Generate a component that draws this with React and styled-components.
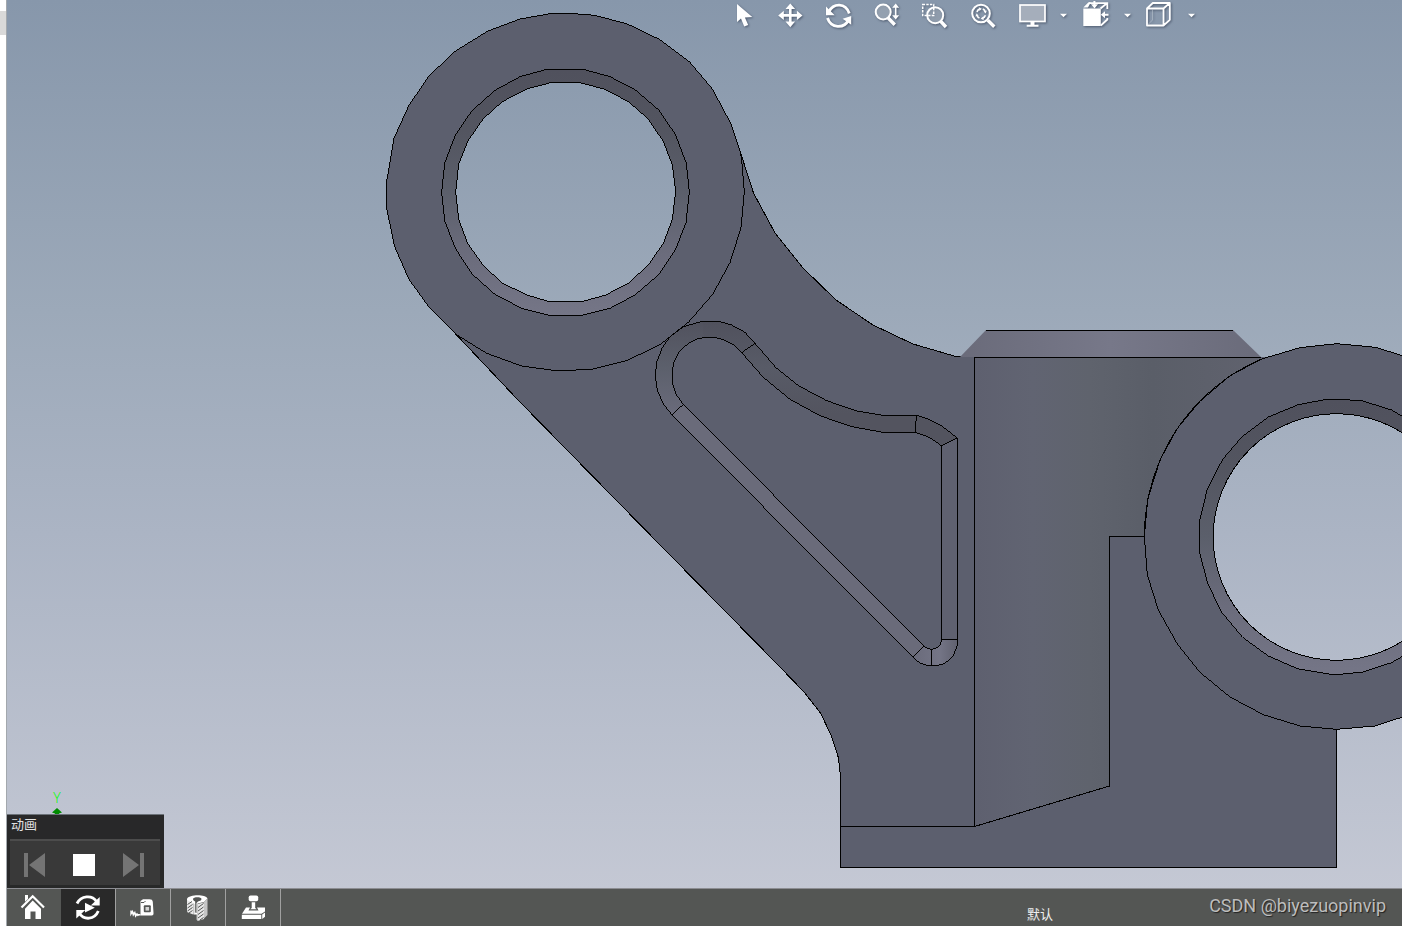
import styled, { createGlobalStyle, css } from 'styled-components';

const GlobalStyle = createGlobalStyle`
  * {
    box-sizing: border-box;
  }
  body {
    margin: 0;
    font-family: 'Liberation Sans', 'Noto Sans CJK SC', sans-serif;
    background-color: #ffffff;
  }
`;

const Page = styled.div`
  display: flex;
  height: 100vh;
  overflow: hidden;
`;
const Gutter = styled.div`
  flex: none;
  width: 7px;
  padding-top: 11px;
  border-right: 1px solid #a3a8ad;
`;
const GutterTab = styled.div`
  height: 24px;
  background-color: #d9d9d9;
`;
const Main = styled.main`
  flex: 1;
  min-width: 0;
  display: flex;
  flex-direction: column;
`;
const Viewport = styled.section`
  position: relative;
  flex: 1;
  min-height: 0;
  background-color: #c4c8d4;
`;
const Drawing = styled.svg`
  display: block;
  width: 100%;
  height: 100%;
`;
const ViewToolbar = styled.div`
  position: absolute;
  top: 0;
  right: 202px;
  display: flex;
`;
const plainButton = css`
  display: flex;
  align-items: center;
  justify-content: center;
  padding: 0;
  border: none;
  background: none;
  color: #ffffff;
`;
const ToolButton = styled.button`
  ${plainButton}
  width: ${(props) => (props.$caret ? '16px' : '48px')};
  height: 30px;
`;
const Icon = styled.svg`
  flex: none;
  width: ${(props) => props.$width || 30}px;
  height: 30px;
  fill: none;
  stroke: none;
  filter: ${(props) => (props.$shadow ? 'drop-shadow(1px 1px 1px rgba(40, 50, 70, 0.6))' : 'none')};
`;
const AnimationPanel = styled.div`
  position: absolute;
  left: 0;
  bottom: 0;
  width: 157px;
  padding: 0 4px 3px 3px;
  border-top: 1px solid #6b7178;
  background-color: rgba(35, 35, 35, 0.97);
`;
const PanelTitle = styled.h2`
  margin: 0;
  padding: 0 1px;
  height: 24px;
  font-size: 13px;
  line-height: 20px;
  font-weight: 400;
  color: #e2e2e2;
`;
const Controls = styled.div`
  display: grid;
  grid-template-columns: repeat(3, 1fr);
  height: 46px;
  padding: 4px 2px 0 0;
  border-top: 2px solid #4c4c4c;
  background-color: #393939;
`;
const ControlButton = styled.button`
  ${plainButton}
  color: ${(props) => (props.$active ? '#ffffff' : '#747474')};
`;
const BottomBar = styled.footer`
  flex: none;
  display: flex;
  height: 38px;
  border-top: 1px solid #8c8d92;
  background-color: #545654;
`;
const TabButton = styled.button`
  ${plainButton}
  box-sizing: content-box;
  width: 54px;
  padding-bottom: 1px;
  border-right: ${(props) => (props.$first ? 'none' : '1px solid #a0a0a0')};
  background-color: ${(props) => (props.$active ? '#292929' : 'transparent')};
`;
const ConfigName = styled.span`
  align-self: flex-end;
  margin-left: auto;
  padding-bottom: 2px;
  font-size: 13px;
  line-height: 18px;
  color: #f0f0f0;
`;
const Watermark = styled.span`
  margin-left: 156px;
  padding: 6px 16px 0 0;
  font-family: Roboto, sans-serif;
  font-size: 18px;
  line-height: 22px;
  color: #bdbdbd;
  text-shadow: 1px 1px 1px #222222;
`;

const CursorIcon = () => (
  <Icon $shadow viewBox='0 0 30 30'>
    <path fill='#fff' d='M8 4v18l4-3.4 3.2 8 4-1.7-3.3-7.4 7.4-.4z' />
  </Icon>
);
const PanIcon = () => (
  <Icon $shadow viewBox='0 0 30 30'>
    <path stroke='#fff' strokeWidth='2.6' d='M13.3 6v19M4 15.4h19' />
    <path
      fill='#fff'
      d='M13.3 3.5l4.8 5.6H8.5zM13.3 27.2l4.8-5.6H8.5zM1.2 15.4l5.6-4.7v9.4zM25.5 15.4l-5.6-4.7v9.4z'
    />
  </Icon>
);
const RotateIcon = () => (
  <Icon $shadow viewBox='0 0 30 30'>
    <path stroke='#fff' strokeWidth='2.8' d='M4 11.5C8.5 3 20.5 2.500 24.3 13.500M2.500 18C6 28.500 19 29 23.5 20' />
    <path fill='#fff' d='M1 6.500v8.700h8.700zM26.200 16v8.700l-8.600-6z' />
  </Icon>
);
const ZoomIcon = () => (
  <Icon $shadow viewBox='0 0 30 30'>
    <circle cx='10.2' cy='12' r='7.5' fill='#b4bfcc' fillOpacity='.6' stroke='#fff' strokeWidth='2' />
    <path stroke='#fff' strokeWidth='3.4' d='M15.2 18l6.600 6.800' />
    <path stroke='#fff' strokeWidth='1.5' d='M22.7 5v13' />
    <path fill='#fff' d='M22.7 3.5l3.500 4.300h-7zM22.7 19.5l3.500-4.300h-7z' />
  </Icon>
);
const ZoomAreaIcon = () => (
  <Icon $shadow viewBox='0 0 30 30'>
    <circle cx='14.2' cy='15.2' r='8' fill='#b4bfcc' fillOpacity='.5' stroke='#fff' strokeWidth='2' />
    <path stroke='#fff' strokeWidth='3.4' d='M19.400 21l5.600 6' />
    <rect x='1.7' y='4.5' width='11' height='11' stroke='#fff' strokeWidth='1.5' strokeDasharray='2.4 1.2' />
  </Icon>
);
const ZoomFitIcon = () => (
  <Icon $shadow viewBox='0 0 30 30'>
    <circle cx='12' cy='13.5' r='8.8' stroke='#fff' strokeWidth='2' />
    <path stroke='#fff' strokeWidth='3.4' d='M18.8 20.2l6.500 6.500' />
    <path stroke='#fff' strokeWidth='1.6' d='M8 12c.4-1.500 1.200-2.500 2.500-3M13.800 9c1.400.5 2.200 1.500 2.600 3M16.400 15.300c-.4 1.400-1.200 2.300-2.600 2.800M10.500 18.100c-1.300-.5-2.100-1.400-2.500-2.800' />
    <path fill='#fff' d='M9.800 7.300l3 1.500-2.300 2.200zM14.600 16.200v4l-2.900-1.700zM17.800 10.500l-1 3-2.200-2.100zM6.500 16.500l1-3 2.200 2z' />
  </Icon>
);
const DisplayIcon = () => (
  <Icon $shadow viewBox='0 0 30 30'>
    <rect x='3' y='5' width='25' height='16.5' fill='#a5aebb' stroke='#fff' strokeWidth='1.7' />
    <path fill='#fff' d='M13.5 22h4v2.8h4v2H9.7v-2h3.8z' />
  </Icon>
);
const SolidCubeIcon = () => (
  <Icon $shadow viewBox='0 0 30 30'>
    <path fill='#fff' d='M2.300 8.500h17.500V26H2.300zM2.300 7.500l5.200-5.200h2.200L7 7.500z' />
    <path stroke='#fff' strokeWidth='1.800' d='M8 3.200h18.300V9M26.300 18v1.500l-6.500 6M19.500 8.500l6.500-5.300' />
    <path stroke='#fff' strokeWidth='2' d='M13.400 1v4M27.500 14.800h-4' />
    <path fill='#fff' d='M10 4.200h7l-3.500 4.300zM24 11.300v7l-4.200-3.500z' />
  </Icon>
);
const WireCubeIcon = () => (
  <Icon $shadow viewBox='0 0 30 30'>
    <path
      stroke='#fff'
      strokeWidth='1.8'
      strokeLinejoin='round'
      d='M2 8.5h16.500v17H2zM2 8.500l5.800-5.500h17l-6.300 5.500M24.800 3v16.800l-6.300 5.700'
    />
    <path stroke='#c4cdd8' strokeOpacity='.5' strokeWidth='1' d='M7.500 9.500v10.500l-4.500 4.500' />
  </Icon>
);
const CaretIcon = () => (
  <Icon $shadow $width={10} viewBox='0 0 10 30'>
    <path fill='#fff' d='M1 13.700h7l-3.500 3.600z' />
  </Icon>
);

const PrevIcon = () => (
  <Icon viewBox='0 0 30 30'>
    <path fill='currentColor' d='M4 3h4v24H4zM9 15L25 3v24z' />
  </Icon>
);
const StopIcon = () => (
  <Icon viewBox='0 0 30 30'>
    <path fill='currentColor' d='M4 4h22v22H4z' />
  </Icon>
);
const NextIcon = () => (
  <Icon viewBox='0 0 30 30'>
    <path fill='currentColor' d='M22 3h4v24h-4zM21 15L5 3v24z' />
  </Icon>
);

const HomeIcon = () => (
  <Icon viewBox='0 0 30 30'>
    <path fill='#fff' d='M6 3h3v4l-3 2.8z' />
    <path stroke='#fff' strokeWidth='2.2' d='M2.5 15.5L13.7 4.3 25 15.5' />
    <path fill='#fff' d='M13.7 8.5l8.3 8.2V27h-5.5v-7.5h-5V27H6V16.7z' />
  </Icon>
);
const MotionIcon = () => (
  <Icon viewBox='0 0 30 30'>
    <path stroke='#fff' strokeWidth='2.8' d='M4 11.5C8 3.5 19 2.5 23.5 9.5M6 21C11 28.5 21.5 28 25.3 19' />
    <path fill='#fff' d='M26.7 5v8.5h-9zM3.3 26.5V18h9zM12 10.8l9.800 5L12 20.600z' />
  </Icon>
);
const MeasureIcon = () => (
  <Icon viewBox='0 0 30 30'>
    <path fill='#fff' d='M12.500 9l2.500-1.800h6.500c2 0 3 .8 3.300 2.500l.7 11.800c0 1.200-.6 2-1.800 2H12.500z' />
    <path stroke='#545654' strokeWidth='1' d='M13 10.500h3l1.500-1.500' />
    <rect x='15.800' y='13.300' width='7' height='7' rx='1' fill='#545654' />
    <rect x='17.500' y='15' width='3.600' height='3.600' fill='#d5d5d5' />
    <path stroke='#fff' strokeWidth='1.400' d='M12.500 22.800H9.500L2.500 19.500M3 18.500v3.500l1.500-2.500.8 3.500 1.500-2.500.8 3.500 1.500-2 1 2' />
  </Icon>
);
const SectionIcon = () => (
  <Icon viewBox='0 0 30 30'>
    <path fill='#fff' d='M4 7C5.500 2.500 22.500 2 24.500 6.500L21 10l-6.500 1.500V28.500l-4-2.500V20L4 20z' />
    <path fill='#545654' d='M10 7c0-2.300 8.500-2.500 8.500 0 0 1.500-2 2-3.500 2.500l-1.500 1.500v10l-1.300-.5V9.500C11 9 10 8 10 7z' />
    <path fill='#e8e8e8' d='M4 8l6 3v11.500l-6-2.500zM14.500 12l6.500-1.500v16.500l-6.500 2z' />
    <path fill='#c6c6c6' d='M21 10l3.500-3.500V23L21 26.500zM10 11l1.500 1v9.500l-1.500 1z' />
    <path fill='#545654' d='M9.500 22.500h4.200V29H9.500z' />
    <path
      stroke='#545654'
      strokeWidth='1'
      d='M4.500 12.500l4.500-3M4.500 16l5-3.500M4.500 19l5-3.500M6 21l3.500-2.500M15 15.500l5.500-4M15 19l5.500-4M15 22.500l5.500-4M15 26l5.500-4M17 28l3.500-2.500'
    />
  </Icon>
);
const StampIcon = () => (
  <Icon viewBox='0 0 30 30'>
    <rect x='10.7' y='3.5' width='9.5' height='5.8' rx='1.8' fill='#fff' />
    <path
      fill='#fff'
      d='M13.7 10.3h3.5V16l1.5 1.200h-6.500l1.500-1.200zM8 15.500h4l-1.500 3h10l-1.500-3h8v4l-3.500 2.200H4zM3.800 22.700h19.500V27H3.800zM24.200 22.400l2.800-1.900v4.300L24.200 27z'
    />
  </Icon>
);

const viewTools = [
  { label: 'Select', icon: CursorIcon },
  { label: 'Pan', icon: PanIcon },
  { label: 'Rotate', icon: RotateIcon },
  { label: 'Zoom in or out', icon: ZoomIcon },
  { label: 'Zoom to area', icon: ZoomAreaIcon },
  { label: 'Zoom to fit', icon: ZoomFitIcon },
  { label: 'Display', icon: DisplayIcon },
  { label: 'Display options', icon: CaretIcon, caret: true },
  { label: 'View orientation', icon: SolidCubeIcon },
  { label: 'Orientation options', icon: CaretIcon, caret: true },
  { label: 'Display style', icon: WireCubeIcon },
  { label: 'Style options', icon: CaretIcon, caret: true },
];

const tabs = [
  { label: 'Home', icon: HomeIcon },
  { label: 'Animation', icon: MotionIcon, active: true },
  { label: 'Measure', icon: MeasureIcon },
  { label: 'Section', icon: SectionIcon },
  { label: 'Stamp', icon: StampIcon },
];

// Outlines of the part, three units to the pixel inside their groups
const lugOuter =
  '516,40 566,40 645,46 742,72 840,119 930,187 997,267 1052,370 1081,455 1085,480 1093,575 1083,683 1050,788 998,883 927,965 840,1034 742,1081 640,1107 535,1113 425,1098 320,1060 228,1003 146,920 87,838 44,740 20,625 19,550 42,415 87,316 146,229 225,154 322,94 420,57';
const lugChamfer =
  '500,208 610,208 690,230 765,269 836,330 886,403 919,490 928,575 918,668 886,750 836,824 765,885 690,925 605,946 508,946 425,925 345,883 276,822 226,745 194,662 185,577 194,490 226,405 276,332 345,271 420,230';
const lugHole =
  '516,247 597,247 675,268 745,305 803,355 850,424 877,495 887,575 877,658 850,730 805,795 745,850 675,886 604,905 508,905 440,885 367,849 310,797 263,730 236,658 227,577 236,493 263,424 310,356 367,305 440,267';
const slotOuter =
  '187,64 240,65 275,75 315,97 345,130 408,203 475,257 560,302 650,333 740,348 805,348 829,346 865,357 905,378 952,414 952,1035 940,1068 915,1090 890,1097 862,1097 838,1088 819,1072 96,345 70,312 52,270 46,230 50,187 66,145 90,110 130,80';
const slotInner =
  '195,112 225,112 252,120 282,135 305,158 370,232 450,298 542,348 635,380 730,397 826,397 868,412 904,437 904,1020 902,1033 888,1045 874,1048 862,1044 852,1039 130,313 108,283 97,250 96,215 102,185 118,155 145,130 170,117';
const bossOuter =
  '1190,101 1307,112 1400,141 1510,197 1600,274 1668,355 1720,450 1757,568 1767,680 1758,795 1725,900 1668,1002 1600,1087 1510,1161 1400,1217 1305,1248 1190,1258 1080,1248 970,1214 870,1161 780,1087 712,1002 655,900 622,795 613,680 623,568 660,450 712,355 780,274 870,197 965,147 1080,113';
const bossChamfer =
  '1160,268 1205,268 1268,273 1355,300 1440,350 1510,420 1560,500 1595,590 1602,680 1595,780 1560,860 1510,940 1440,1008 1355,1058 1268,1086 1190,1094 1165,1092 1072,1076 985,1038 908,982 846,908 804,823 778,725 779,632 802,537 848,448 906,380 985,321 1075,284';

const Model = () => (
  <Drawing viewBox='7 0 1395 888' preserveAspectRatio='xMinYMin slice' role='img' aria-label='3D model'>
    <defs>
      <linearGradient id='sky' gradientUnits='userSpaceOnUse' x1='0' y1='0' x2='0' y2='888'>
        <stop offset='0' stopColor='#8797ab' />
        <stop offset='.35' stopColor='#9ca9b9' />
        <stop offset='.6' stopColor='#abb4c4' />
        <stop offset='1' stopColor='#c4c8d4' />
      </linearGradient>
      <linearGradient id='skyLug' gradientUnits='userSpaceOnUse' x1='0' y1='0' x2='0' y2='2664'>
        <stop offset='0' stopColor='#8797ab' />
        <stop offset='.35' stopColor='#9ca9b9' />
        <stop offset='.6' stopColor='#abb4c4' />
        <stop offset='1' stopColor='#c4c8d4' />
      </linearGradient>
      <linearGradient id='chamfer' x1='0' y1='0' x2='0' y2='1'>
        <stop offset='0' stopColor='#50515d' />
        <stop offset='.25' stopColor='#535560' />
        <stop offset='.5' stopColor='#5b5f6b' />
        <stop offset='.75' stopColor='#6b6c7c' />
        <stop offset='1' stopColor='#757687' />
      </linearGradient>
      <linearGradient id='slotWall' gradientUnits='userSpaceOnUse' x1='0' y1='64' x2='0' y2='460'>
        <stop offset='0' stopColor='#50515d' />
        <stop offset='.35' stopColor='#585b67' />
        <stop offset='.7' stopColor='#53545f' />
        <stop offset='1' stopColor='#53545f' />
      </linearGradient>
      <linearGradient id='slotEnd' x1='0' y1='0' x2='0' y2='1'>
        <stop offset='0' stopColor='#51525e' />
        <stop offset='.5' stopColor='#5c606c' />
        <stop offset='1' stopColor='#6a6b7b' />
      </linearGradient>
      <linearGradient id='slotTip' x1='0' y1='0' x2='1' y2='0'>
        <stop offset='0' stopColor='#6a6b7b' />
        <stop offset='.6' stopColor='#747586' />
        <stop offset='1' stopColor='#60616f' />
      </linearGradient>
      <linearGradient id='cylinder' gradientUnits='userSpaceOnUse' x1='975' y1='0' x2='1261' y2='0'>
        <stop offset='0' stopColor='#5e606f' />
        <stop offset='.2' stopColor='#616472' />
        <stop offset='.4' stopColor='#5f636d' />
        <stop offset='.62' stopColor='#5a5e68' />
        <stop offset='1' stopColor='#60626e' />
      </linearGradient>
      <linearGradient id='cone' x1='0' y1='0' x2='1' y2='0'>
        <stop offset='0' stopColor='#6a6b7a' />
        <stop offset='.5' stopColor='#777889' />
        <stop offset='1' stopColor='#6a6b7a' />
      </linearGradient>
    </defs>

    <rect x='7' width='1395' height='888' fill='url(#sky)' />

    <g stroke='#000' strokeWidth='1' fill='none' shapeRendering='crispEdges'>
      {/* arm and base */}
      <path
        stroke='none'
        fill='#5c5f6e'
        d='M740 151L753.5 193 775 233 803 268 836 300 873 325 913 344 956 356.5H1336.5V867.5H840.5V777L838.5 758 831.5 736 820.5 713 804 692 780 667 640 524.5 518 400 450 328 565 192z'
      />
      <path d='M740 151L753.5 193 775 233 803 268 836 300 873 325 913 344 956 356.5H975' />
      <path d='M450 328L518 400 640 524.5 780 667 804 692 820.5 713 831.5 736 838.5 758 840.5 777V867.5H1336.5V729' />
      <path stroke='none' fill='url(#sky)' d='M1233 330H1402V357H1233z' />
      <path stroke='none' fill='url(#cone)' d='M960 357L986 330H1233L1261 357z' shapeRendering='auto' />
      <path stroke='none' fill='url(#cylinder)' d='M974.5 357H1261L1200 440 1144 536.5H1109.5V786L974.5 826.5z' />
      <path d='M986 330.5H1233M974.5 357.5H1261M974.5 356.5V826.5M840.5 826.5H974.5L1109.5 786V536.5H1144.5' />
    </g>

    <g transform='translate(380 0) scale(.333333)' stroke='#000' strokeWidth='3' shapeRendering='crispEdges'>
      <polygon points={lugOuter} fill='#5c5f6e' />
      <polygon points={lugChamfer} fill='url(#chamfer)' />
      <polygon points={lugHole} fill='url(#skyLug)' />
    </g>

    <g transform='translate(640 300) scale(.333333)' stroke='#000' strokeWidth='3' fill='none' shapeRendering='crispEdges'>
      <polygon points={slotOuter} fill='url(#slotWall)' stroke='none' />
      <path
        stroke='none'
        fill='url(#slotEnd)'
        d='M187 64L130 80 90 110 66 145 50 187 46 230 52 270 70 312 96 345 130 313 200 200z'
      />
      <path stroke='none' fill='#6a6b7a' d='M96 345L130 313 852 1039 819 1072z' />
      <path stroke='none' fill='#5f6170' d='M904 437L952 414V1018H904z' />
      <path
        stroke='none'
        fill='url(#slotTip)'
        d='M852 1039L819 1072 838 1088 862 1097H890L915 1090 940 1068 952 1035V1018H904z'
      />
      <polygon points={slotInner} fill='#5c5f6e' />
      <polygon points={slotOuter} />
      <path d='M305 158L345 130M96 345L130 313M819 1072L852 1039M874 1048V1097M904 1018H952M904 437L952 414M826 397L829 346' />
    </g>

    <g transform='translate(940 310) scale(.333333)' stroke='#000' strokeWidth='3' shapeRendering='crispEdges'>
      <polygon points={bossOuter} fill='#5c5f6e' />
      <path d='M613 680A578 578 0 0 1 965 147' fill='none' />
      <polygon points={bossChamfer} fill='url(#chamfer)' />
    </g>
    <circle cx='1336.5' cy='537' r='123.3' fill='url(#sky)' stroke='#000' shapeRendering='crispEdges' />

    {/* axis triad, mostly hidden by the animation panel */}
    <text x='57' y='803' textAnchor='middle' fontFamily='Open Sans, sans-serif' fontWeight='300' fontSize='14' fill='#00ff00'>
      Y
    </text>
    <path fill='#008a00' d='M57 808l5 4.5-3 1v2h-4v-2l-3-1z' />
  </Drawing>
);

const App = () => {
  return (
    <Page>
      <GlobalStyle />
      <Gutter>
        <GutterTab />
      </Gutter>
      <Main>
        <Viewport>
          <Model />
          <ViewToolbar>
            {viewTools.map(({ label, icon: ToolIcon, caret }) => (
              <ToolButton key={label} aria-label={label} $caret={caret}>
                <ToolIcon />
              </ToolButton>
            ))}
          </ViewToolbar>
          <AnimationPanel>
            <PanelTitle>动画</PanelTitle>
            <Controls>
              <ControlButton aria-label='Previous'>
                <PrevIcon />
              </ControlButton>
              <ControlButton aria-label='Stop' $active>
                <StopIcon />
              </ControlButton>
              <ControlButton aria-label='Next'>
                <NextIcon />
              </ControlButton>
            </Controls>
          </AnimationPanel>
        </Viewport>
        <BottomBar>
          {tabs.map(({ label, icon: TabIcon, active }, index) => (
            <TabButton key={label} aria-label={label} $active={active} $first={index === 0}>
              <TabIcon />
            </TabButton>
          ))}
          <ConfigName>默认</ConfigName>
          <Watermark>CSDN @biyezuopinvip</Watermark>
        </BottomBar>
      </Main>
    </Page>
  );
};

export default App;
